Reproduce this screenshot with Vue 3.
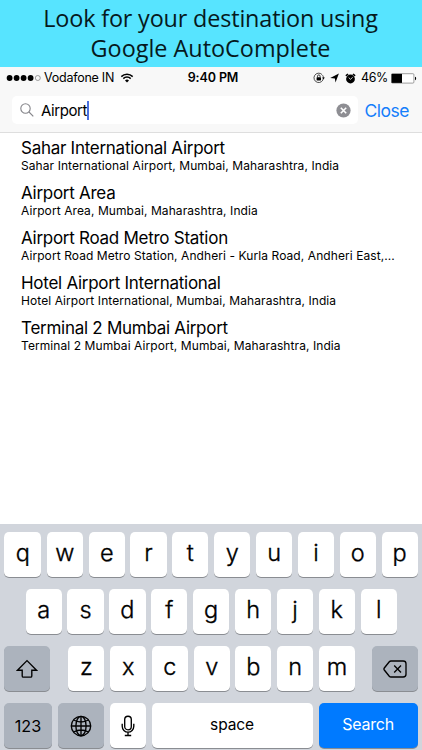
<template>
  <main class="screen">
    <header class="banner">
      <div class="banner-first">Look for your destination using</div>
      <div class="banner-second">Google AutoComplete</div>
    </header>

    <section class="top-bar">
      <div class="status-bar">
        <div class="status-left">
          <svg class="signal" width="35" height="8" viewBox="0 0 35 8">
            <circle v-for="n in 4" :key="n" :cx="7 * n - 3.4" cy="4" r="2.9" />
            <circle cx="31.8" cy="4" r="2.5" fill="none" stroke="#777" stroke-width="0.7" />
          </svg>
          <span class="carrier">Vodafone IN</span>
          <svg class="wifi" width="14" height="10" viewBox="0 0 14 10">
            <path d="M1.3 3.6a8.2 8.2 0 0 1 11.4 0" />
            <path d="M3.3 5.6a5.3 5.3 0 0 1 7.4 0" />
            <path class="wifi-dot" d="M5 7.4a2.9 2.9 0 0 1 4 0L7 9.5z" />
          </svg>
        </div>
        <strong class="clock">9:40 PM</strong>
        <div class="status-right">
          <svg width="12" height="12" viewBox="0 0 12 12">
            <path d="M10.4 6A4.7 4.7 0 1 1 9.1 2.6M10.4 6A4.7 4.7 0 0 0 9.6 3.2" fill="none" stroke="#222" stroke-width="0.8" />
            <path d="M9.1 5.6h2.8L10.5 7.3z" />
            <rect x="3.6" y="5.3" width="4.4" height="3.2" rx="0.4" />
            <path d="M4.5 5.4V4.2a1.3 1.3 0 0 1 2.6 0v1.2" fill="none" stroke="#111" stroke-width="0.8" />
          </svg>
          <svg class="arrow" width="9" height="10" viewBox="0 0 9 10">
            <path d="M8.9 0.6 5.5 9.4 4.9 5.5 0.2 5.1z" />
          </svg>
          <svg class="alarm" width="11" height="11" viewBox="0 0 11 11">
            <circle cx="5.5" cy="6" r="4.4" />
            <path d="M0.9 2.9 3 1M10.1 2.9 8 1" stroke="#000" stroke-width="1.6" />
            <path d="M3.7 4.6 5.5 6.3 7.7 4.3" fill="none" stroke="#fff" stroke-width="0.8" />
          </svg>
          <span class="percent">46%</span>
          <svg class="battery" width="26" height="11" viewBox="0 0 26 11">
            <rect x="0.5" y="0.7" width="22.4" height="9.4" rx="1" fill="#fff" stroke="#777" stroke-width="0.7" />
            <rect x="0.6" y="0.9" width="10.4" height="9" />
            <path d="M24 3.8c1.5.2 1.5 3.2 0 3.4z" />
          </svg>
        </div>
      </div>

      <div class="search-row">
        <div class="search-field">
          <svg class="magnifier" width="14" height="14" viewBox="0 0 14 14">
            <circle cx="5.5" cy="5.5" r="4.7" />
            <path d="M9 9l4.3 4.3" />
          </svg>
          <span class="query">{{ query }}</span>
          <i class="caret"></i>
          <button class="clear" type="button" aria-label="Clear" @click="query = ''">
            <svg width="15" height="15" viewBox="0 0 15 15">
              <circle cx="7.5" cy="7.5" r="7.1" />
              <path d="M4.8 4.8l5.4 5.4M10.2 4.8l-5.4 5.4" />
            </svg>
          </button>
        </div>
        <button class="close" type="button">Close</button>
      </div>
    </section>

    <ul class="results">
      <li v-for="place in places" :key="place.name">
        <div class="name">{{ place.name }}</div>
        <div class="address">{{ place.address }}</div>
      </li>
    </ul>

    <section class="keyboard">
      <div class="key-row first">
        <button v-for="k in 'qwertyuiop'" :key="k" class="key" type="button" @click="press(k)"><span>{{ k }}</span></button>
      </div>
      <div class="key-row second">
        <button v-for="k in 'asdfghjkl'" :key="k" class="key" type="button" @click="press(k)"><span>{{ k }}</span></button>
      </div>
      <div class="key-row third">
        <button class="key dark wide" type="button" aria-label="Shift">
          <svg width="22" height="20" viewBox="0 0 22 20">
            <path d="M11 1.6 1.5 11.2h4.7v5.7q0 1.2 1.2 1.2h7.2q1.2 0 1.2-1.2v-5.7h4.7z" />
          </svg>
        </button>
        <div class="letters">
          <button v-for="k in 'zxcvbnm'" :key="k" class="key" type="button" @click="press(k)"><span>{{ k }}</span></button>
        </div>
        <button class="key dark wide" type="button" aria-label="Delete" @click="erase">
          <svg width="24" height="18" viewBox="0 0 24 18">
            <path d="M8 1h12.2Q23 1 23 3.8v10.4q0 2.8-2.8 2.8H8Q7 17 6.3 16.2L1.3 10q-.7-1 0-2L6.3 1.8Q7 1 8 1z" />
            <path d="M11.2 5.6l6.8 6.8M18 5.6l-6.8 6.8" />
          </svg>
        </button>
      </div>
      <div class="key-row fourth">
        <button class="key dark numbers" type="button">123</button>
        <button class="key dark wide globe" type="button" aria-label="Language">
          <svg width="22" height="22" viewBox="0 0 22 22">
            <circle cx="11" cy="11" r="9.7" />
            <ellipse cx="11" cy="11" rx="5.1" ry="9.7" />
            <path d="M11 1.3v19.4M1.3 11h19.4M3.6 5Q11 9 18.4 5M3.6 17Q11 13 18.4 17" />
          </svg>
        </button>
        <button class="key mic" type="button" aria-label="Dictate">
          <svg width="14" height="22" viewBox="0 0 14 22">
            <rect x="3.7" y="1.2" width="6.6" height="13.6" rx="3.3" />
            <path d="M1.2 8.7v2.6a5.8 5.8 0 0 0 11.6 0V8.7M7 17.2v3.2M3.8 20.5h6.4" />
          </svg>
        </button>
        <button class="key space" type="button" @click="press(' ')">space</button>
        <button class="key search" type="button">Search</button>
      </div>
    </section>
  </main>
</template>

<script setup>
import { ref } from 'vue'

const query = ref('Airport')

const places = [
  { name: 'Sahar International Airport', address: 'Sahar International Airport, Mumbai, Maharashtra, India' },
  { name: 'Airport Area', address: 'Airport Area, Mumbai, Maharashtra, India' },
  { name: 'Airport Road Metro Station', address: 'Airport Road Metro Station, Andheri - Kurla Road, Andheri East,...' },
  { name: 'Hotel Airport International', address: 'Hotel Airport International, Mumbai, Maharashtra, India' },
  { name: 'Terminal 2 Mumbai Airport', address: 'Terminal 2 Mumbai Airport, Mumbai, Maharashtra, India' }
]

function press(k) {
  query.value += k
}

function erase() {
  query.value = query.value.slice(0, -1)
}
</script>

<style>
body {
  margin: 0;
}
</style>

<style scoped>
.screen {
  background: #ffffff;
  color: #000000;
  display: flex;
  flex-direction: column;
  font-family: Inter, "Liberation Sans", sans-serif;
  height: 750px;
  overflow: hidden;
  width: 422px;
}

button {
  border: 0;
  color: inherit;
  font-family: inherit;
  margin: 0;
  padding: 0;
}

.banner {
  background: #57e4ff;
  box-sizing: border-box;
  color: #06191d;
  flex: 0 0 67px;
  font-family: "Open Sans", "Noto Sans", sans-serif;
  font-size: 23.4px;
  line-height: 29.5px;
  padding: 4px 1px 0 0;
  text-align: center;
  white-space: nowrap;
}

.banner-first {
  letter-spacing: -0.16px;
}

.top-bar {
  background: #f8f8f8;
  border-bottom: 1px solid #dedede;
  box-sizing: border-box;
  flex: 0 0 66px;
}

.status-bar {
  align-items: center;
  display: grid;
  font-size: 12.5px;
  grid-template-columns: 1fr auto 1fr;
  height: 22px;
  line-height: 22px;
  padding: 0 6px;
}

.status-left,
.status-right {
  align-items: center;
  display: flex;
}

.status-right {
  justify-content: flex-end;
  margin-right: -1px;
}

.carrier {
  letter-spacing: -0.25px;
  margin-left: 3px;
}

.wifi {
  fill: none;
  margin-left: 6px;
  stroke: #000000;
  stroke-width: 1.5;
}

.wifi-dot {
  fill: #000000;
  stroke: none;
}

.clock {
  font-size: 12.5px;
  font-weight: 600;
  letter-spacing: -0.1px;
  padding-left: 4px;
}

.arrow {
  margin-left: 5px;
}

.alarm {
  margin-left: 6px;
}

.percent {
  letter-spacing: -0.4px;
  margin-left: 5px;
}

.battery {
  margin-left: 3px;
}

.search-row {
  align-items: center;
  display: flex;
  padding: 7px 13px 0 12px;
}

.search-field {
  align-items: center;
  background: #ffffff;
  border-radius: 5px;
  box-sizing: border-box;
  display: flex;
  height: 28px;
  padding: 0 7px 0 8px;
  width: 346px;
}

.magnifier {
  fill: none;
  stroke: #85858a;
  stroke-width: 1.1;
}

.query {
  font-size: 15px;
  letter-spacing: -0.4px;
  margin-left: 7px;
}

.caret {
  background: #4a70e0;
  height: 19px;
  width: 1.5px;
}

.clear {
  background: transparent;
  display: flex;
  margin-left: auto;
}

.clear circle {
  fill: #8e8e93;
}

.clear path {
  stroke: #ffffff;
  stroke-width: 1.6;
}

.close {
  background: transparent;
  color: #157efb;
  font-size: 17.5px;
  letter-spacing: -0.5px;
  margin-left: auto;
}

.results {
  flex: 1;
  list-style: none;
  margin: 0;
  padding: 5.4px 0 0 21px;
}

.results li {
  height: 44.8px;
}

.name {
  font-size: 17px;
  letter-spacing: -0.27px;
  line-height: 20px;
  white-space: nowrap;
}

.address {
  font-size: 12px;
  letter-spacing: 0.08px;
  line-height: 15px;
  white-space: nowrap;
}

.keyboard {
  background: #d1d5dc;
  box-sizing: border-box;
  display: flex;
  flex: 0 0 226.5px;
  flex-direction: column;
  gap: 11.4px;
  padding: 8.4px 4.4px 0;
}

.key-row {
  display: flex;
  gap: 5.7px;
}

.first .key:first-child {
  flex: 0 0 36.7px;
}

.second {
  padding: 0 20.9px 0 21.2px;
}

.letters {
  display: flex;
  gap: 5.7px;
  margin: 0 auto 0 18px;
  width: 286.6px;
}

.third {
  gap: 0;
}

.fourth {
  gap: 6px;
}

.key {
  align-items: center;
  background: #ffffff;
  border-radius: 5px;
  box-shadow: 0 1px 0 #8a8d92;
  display: flex;
  flex: 1 1 0;
  font-size: 23.5px;
  font-weight: 300;
  height: 45.6px;
  justify-content: center;
  min-width: 0;
}

.key span {
  line-height: 28px;
  padding-bottom: 3px;
  -webkit-text-stroke: 0.35px #000000;
}

.key svg {
  fill: none;
  stroke: #000000;
  stroke-width: 1.35;
}

.dark {
  background: #acb3bd;
}

.wide {
  flex: 0 0 46px;
}

.key.numbers {
  flex: 0 0 47.2px;
  font-size: 16.2px;
  font-weight: 400;
}

.key.mic {
  flex: 0 0 36px;
}

.key.space {
  box-sizing: border-box;
  flex: 0 0 161px;
  font-size: 15.5px;
  font-weight: 400;
  letter-spacing: -0.1px;
  padding-bottom: 2px;
}

.key.search {
  background: #007aff;
  box-sizing: border-box;
  color: #ffffff;
  font-size: 16px;
  font-weight: 400;
  letter-spacing: -0.2px;
  padding-bottom: 3px;
}
</style>
